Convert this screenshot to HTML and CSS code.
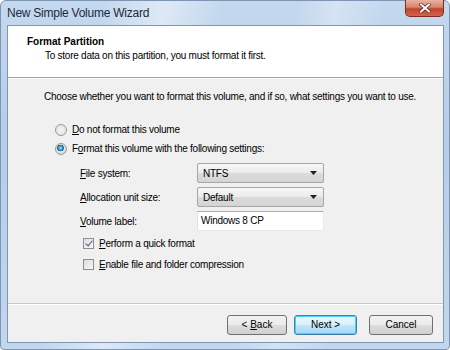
FILE: index.html
```html
<!doctype html>
<html>
<head>
  <title>New Simple Volume Wizard</title>
  <meta charset='UTF-8'>
  <link rel="stylesheet" href="styles.css">
</head>
<body>
  <div class="window">
    <div class="titlebar">
      <span class="title">New Simple Volume Wizard</span>
      <span class="close">
        <svg width="12" height="10" viewBox="0 0 12 10">
          <path d="M2 1.5 L10 8.5 M10 1.5 L2 8.5" stroke="#5a1e14" stroke-width="3.4" stroke-linecap="square"/>
          <path d="M2 1.5 L10 8.5 M10 1.5 L2 8.5" stroke="#fff" stroke-width="2" stroke-linecap="square"/>
        </svg>
      </span>
    </div>
    <div class="client">
      <header class="banner">
        <h1>Format Partition</h1>
        <p>To store data on this partition, you must format it first.</p>
      </header>
      <main class="page">
        <p class="intro">Choose whether you want to format this volume, and if so, what settings you want to use.</p>
        <label class="option"><input type="radio" name="fmt"><span><u>D</u>o not format this volume</span></label>
        <label class="option"><input type="radio" name="fmt" checked><span>F<u>o</u>rmat this volume with the following settings:</span></label>
        <div class="settings">
          <span><u>F</u>ile system:</span>
          <div class="combo"><span>NTFS</span><svg width="7" height="4" viewBox="0 0 7 4"><path d="M0 0 H7 L3.5 4 Z" fill="#222"/></svg></div>
          <span><u>A</u>llocation unit size:</span>
          <div class="combo"><span>Default</span><svg width="7" height="4" viewBox="0 0 7 4"><path d="M0 0 H7 L3.5 4 Z" fill="#222"/></svg></div>
          <span><u>V</u>olume label:</span>
          <div class="field">Windows 8 CP</div>
        </div>
        <label class="check"><input type="checkbox" checked><span><u>P</u>erform a quick format</span></label>
        <label class="check"><input type="checkbox"><span><u>E</u>nable file and folder compression</span></label>
      </main>
      <footer class="buttons">
        <button>&lt; <u>B</u>ack</button>
        <button class="default">Next &gt;</button>
        <button class="cancel">Cancel</button>
      </footer>
    </div>
  </div>
</body>
</html>
```

FILE: styles.css
```css
html, body { height: 100% }
body {
  margin: 0;
  background: #fff;
  font: 10px/15px 'Liberation Sans', Arial, sans-serif;
  letter-spacing: -.25px;
  color: #000 }
.window {
  width: 450px;
  height: 350px;
  box-sizing: border-box;
  display: flex;
  flex-flow: column;
  border: 1px solid #7d95b0;
  border-radius: 6px 6px 4px 4px;
  background:
    linear-gradient(100deg, transparent 20%, rgba(255,255,255,.45) 32%, transparent 44%, transparent 58%, rgba(255,255,255,.3) 66%, transparent 76%),
    linear-gradient(180deg, #c4d8ee, #b6cde8 40%, #c2d7ee) }
  .titlebar {
    height: 24px;
    display: flex;
    justify-content: space-between;
    align-items: flex-start;
    padding-left: 6px }
    .title {
      font-size: 12px;
      line-height: 25px;
      color: #1c2a3c }
    .close {
      width: 39px;
      height: 17px;
      margin: -1px 5px 0 0;
      display: flex;
      align-items: center;
      justify-content: center;
      box-sizing: border-box;
      border: 1px solid #7b2d20;
      border-top: 0;
      border-radius: 0 0 5px 5px;
      background: linear-gradient(180deg, #eab2a2, #d9826c 45%, #c4432c 55%, #d2634a) }
  .client {
    flex: 1;
    margin: 0 5px 6px 6px;
    border: 1px solid #8196b2;
    background: #f0f0f0;
    display: flex;
    flex-flow: column }
  .banner {
    height: 52px;
    background: #fff;
    border-bottom: 1px solid #a0a0a0;
    box-shadow: 0 1px #fff;
    padding: 9px 0 0 19px;
    box-sizing: border-box }
    .banner h1 {
      font-size: 10px;
      font-weight: bold;
      letter-spacing: 0;
      margin: 0;
      line-height: 14px }
    .banner p {
      margin: 0 0 0 18px;
      line-height: 14px }
  .page {
    flex: 1;
    padding: 11px 0 0 36px }
    .intro { margin: 0 0 16px }
    .option {
      display: flex;
      align-items: center;
      gap: 5px;
      height: 19px;
      margin-left: 11px }
    .option input {
      appearance: none;
      margin: 0;
      width: 12px;
      height: 12px;
      border-radius: 50%;
      border: 1px solid #9a9a9a;
      background: radial-gradient(circle, #f6f6f6, #dadada);
      box-sizing: border-box }
    .option input:checked {
      background: radial-gradient(circle at 45% 40%, #a8e0fb 0, #3a8fc6 2.2px, #1f5f92 3.2px, #e8e8e8 3.6px, #d4d4d4 6px) }
    .settings {
      display: grid;
      grid-template-columns: 117px 127px;
      grid-auto-rows: 20px;
      row-gap: 4px;
      align-items: center;
      margin: 5px 0 2px 36px }
    .combo, .field {
      height: 20px;
      box-sizing: border-box;
      border: 1px solid #a6a6a6;
      border-radius: 2px;
      display: flex;
      align-items: center;
      padding: 0 6px 0 5px }
    .combo {
      justify-content: space-between;
      background: linear-gradient(180deg, #f6f6f6 0, #ebebeb 50%, #dcdcdc 50%, #d4d4d4) }
    .field {
      background: #fff;
      border-color: #abadb3 #e3e9ef #e3e9ef #e2e3ea;
      border-radius: 0;
      align-items: flex-start;
      padding: 1px 3px }
    .check {
      display: flex;
      align-items: center;
      gap: 5px;
      height: 21px;
      margin-left: 39px }
    .check input {
      appearance: none;
      margin: 0;
      width: 11px;
      height: 11px;
      border: 1px solid #8f8f8f;
      background: linear-gradient(135deg, #dcdcdc, #f8f8f8);
      box-sizing: border-box;
      position: relative }
    .check input:checked::after {
      content: '';
      position: absolute;
      left: 3px;
      top: 0;
      width: 3px;
      height: 6px;
      border: solid #3d5a8c;
      border-width: 0 1.5px 1.5px 0;
      transform: rotate(40deg) }
  .buttons {
    height: 39px;
    border-top: 1px solid #c8c8c8;
    box-shadow: inset 0 1px #fff;
    display: flex;
    justify-content: flex-end;
    align-items: flex-start;
    padding: 11px 10px 0 0;
    box-sizing: border-box;
    gap: 7px }
    .buttons button {
      width: 60px;
      height: 20px;
      font: inherit;
      line-height: 14px;
      padding: 0;
      border: 1px solid #707070;
      border-radius: 3px;
      background: linear-gradient(180deg, #f2f2f2 0, #ebebeb 50%, #dddddd 50%, #cfcfcf);
      color: #000 }
    .buttons .default {
      width: 63px;
      border-color: #3c7fb1;
      box-shadow: inset 0 0 0 1px #48d1f8;
      background: linear-gradient(180deg, #eaf6fd 0, #d9f0fc 50%, #bee6fd 50%, #a7d9f5) }
    .buttons .cancel { margin-left: 5px; width: 64px }
```
